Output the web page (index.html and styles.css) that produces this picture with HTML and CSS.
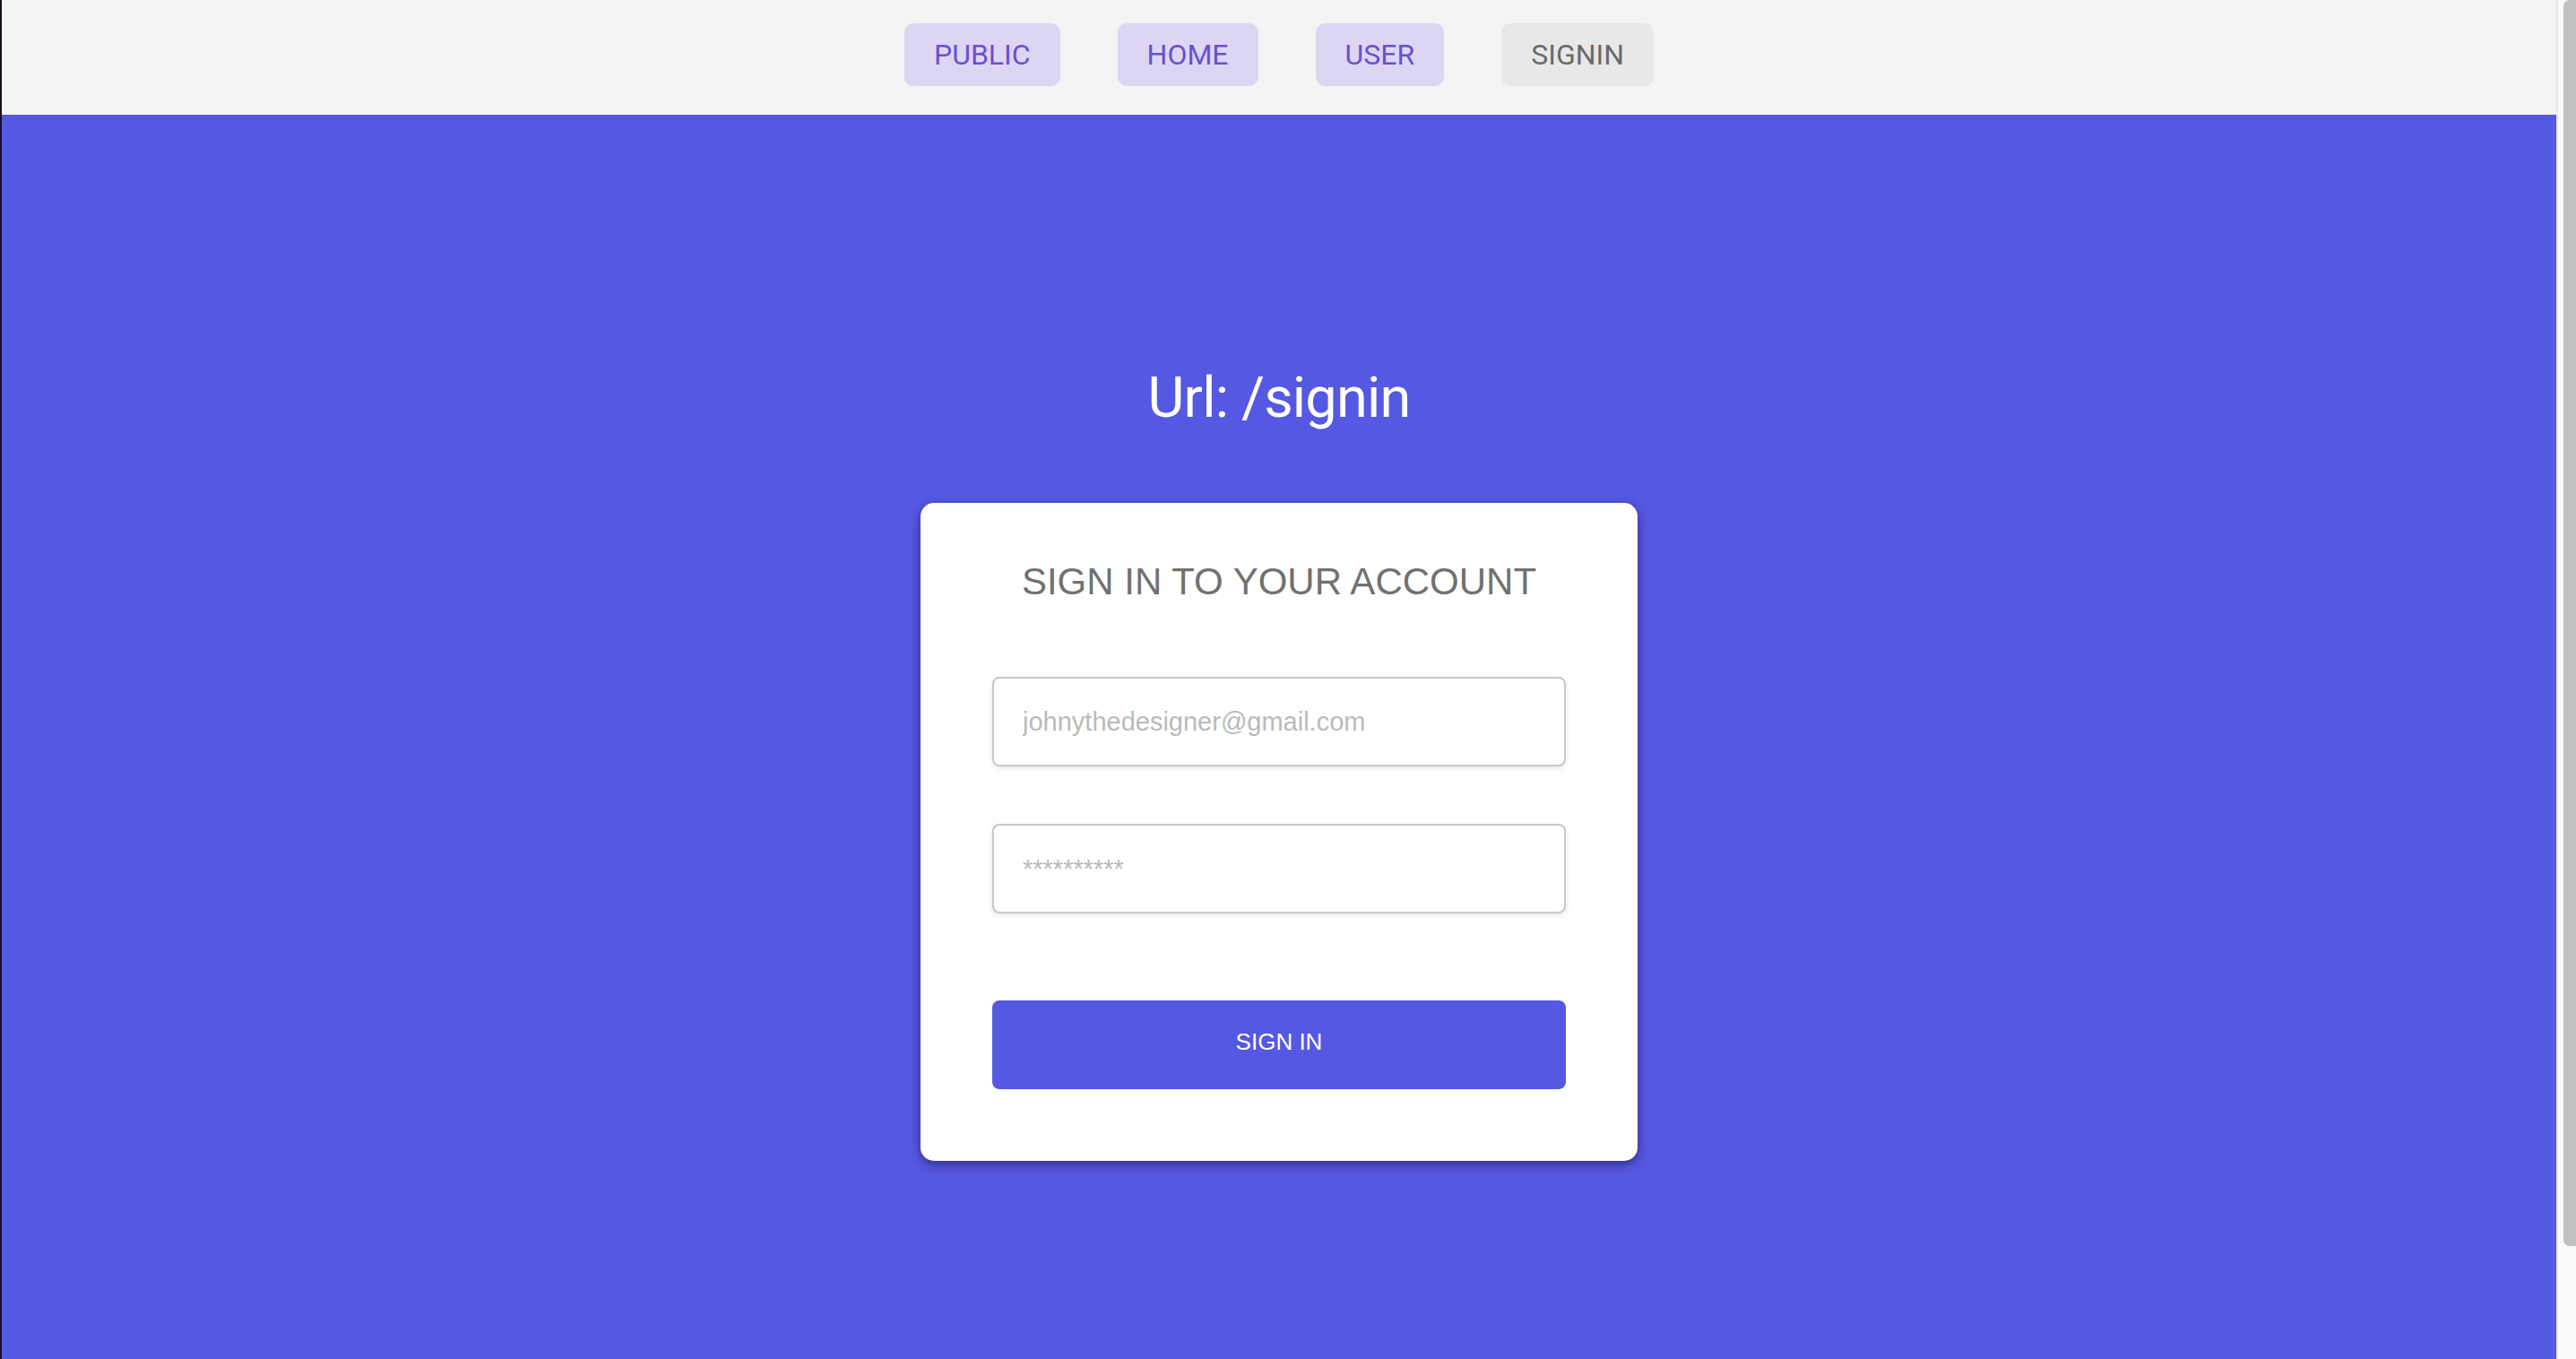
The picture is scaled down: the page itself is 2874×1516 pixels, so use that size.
FILE: index.html
```html
<!DOCTYPE html>
<html lang="en">
<head>
<meta charset="utf-8">
<title>Sign in</title>
<link rel="stylesheet" href="styles.css">
</head>
<body>
<div class="window">
  <div class="page">
    <nav class="topnav">
      <a class="navbtn" href="#">PUBLIC</a>
      <a class="navbtn" href="#">HOME</a>
      <a class="navbtn" href="#">USER</a>
      <a class="navbtn navbtn-current" href="#">SIGNIN</a>
    </nav>
    <main class="main">
      <h1 class="url-title">Url: /signin</h1>
      <form class="card">
        <h2 class="card-title">SIGN IN TO YOUR ACCOUNT</h2>
        <input class="field field-email" type="email" placeholder="johnythedesigner@gmail.com">
        <input class="field field-pass" type="password" placeholder="**********">
        <button class="submit" type="button">SIGN IN</button>
      </form>
    </main>
  </div>
  <div class="scrollbar" aria-hidden="true">
    <div class="scrollbar-thumb"></div>
  </div>
</div>
</body>
</html>
```

FILE: styles.css
```css
html, body {
  margin: 0;
  height: 100%;
  overflow: hidden;
}

body {
  background: #5558e2;
}

.window {
  display: flex;
  height: 1516px;
}

.page {
  flex: 1;
  display: flex;
  flex-direction: column;
  border-left: 2px solid #1f0d26;
  min-width: 0;
}

.scrollbar {
  width: 22px;
  box-sizing: border-box;
  background: #fafafa;
  border-left: 2px solid #e8e8e8;
  padding-left: 6px;
}

.scrollbar-thumb {
  height: 1390px;
  background: #c1c1c1;
  border-radius: 7px 0 0 7px;
}

.topnav {
  height: 128px;
  box-sizing: border-box;
  padding-top: 26px;
  background: #f4f4f4;
  display: flex;
  justify-content: center;
  align-items: flex-start;
  gap: 64px;
}

.navbtn {
  height: 70px;
  box-sizing: border-box;
  padding: 0 33px;
  display: flex;
  align-items: center;
  border-radius: 10px;
  background: #ddd6f3;
  color: #6a50d2;
  font-family: Roboto, "Noto Sans", sans-serif;
  font-size: 32px;
  text-decoration: none;
}

.navbtn-current {
  background: #e8e8e8;
  color: #6a6a6a;
}

.main {
  flex: 1;
  background: #5558e2;
  display: flex;
  flex-direction: column;
  align-items: center;
  padding-top: 278px;
}

.url-title {
  margin: 0;
  font-family: Roboto, "Noto Sans", sans-serif;
  font-weight: 400;
  font-size: 63px;
  line-height: 76px;
  letter-spacing: -0.8px;
  color: #ffffff;
}

.card {
  margin-top: 79px;
  width: 800px;
  box-sizing: border-box;
  padding: 64px 80px 80px;
  background: #ffffff;
  border-radius: 15px;
  box-shadow: 0 4px 12px rgba(20, 10, 60, 0.55);
  display: flex;
  flex-direction: column;
  font-family: "Liberation Sans", Arial, sans-serif;
}

.card-title {
  margin: 0 0 82px;
  text-align: center;
  font-weight: 400;
  font-size: 42px;
  line-height: 48px;
  color: #717171;
}

.field {
  height: 100px;
  box-sizing: border-box;
  padding: 0 32px;
  border: 2px solid #c8c8c8;
  border-radius: 8px;
  box-shadow: 0 2px 6px rgba(0, 0, 0, 0.1);
  font-family: "Liberation Sans", Arial, sans-serif;
  font-size: 29px;
  color: #444444;
  outline: none;
}

.field::placeholder {
  color: #bababa;
}

.field-pass {
  margin-top: 64px;
}

.submit {
  margin-top: 97px;
  height: 99px;
  border: none;
  border-radius: 8px;
  background: #5558e2;
  color: #ffffff;
  font-family: "Liberation Sans", Arial, sans-serif;
  font-size: 26px;
  padding: 0 0 6px;
}
```
